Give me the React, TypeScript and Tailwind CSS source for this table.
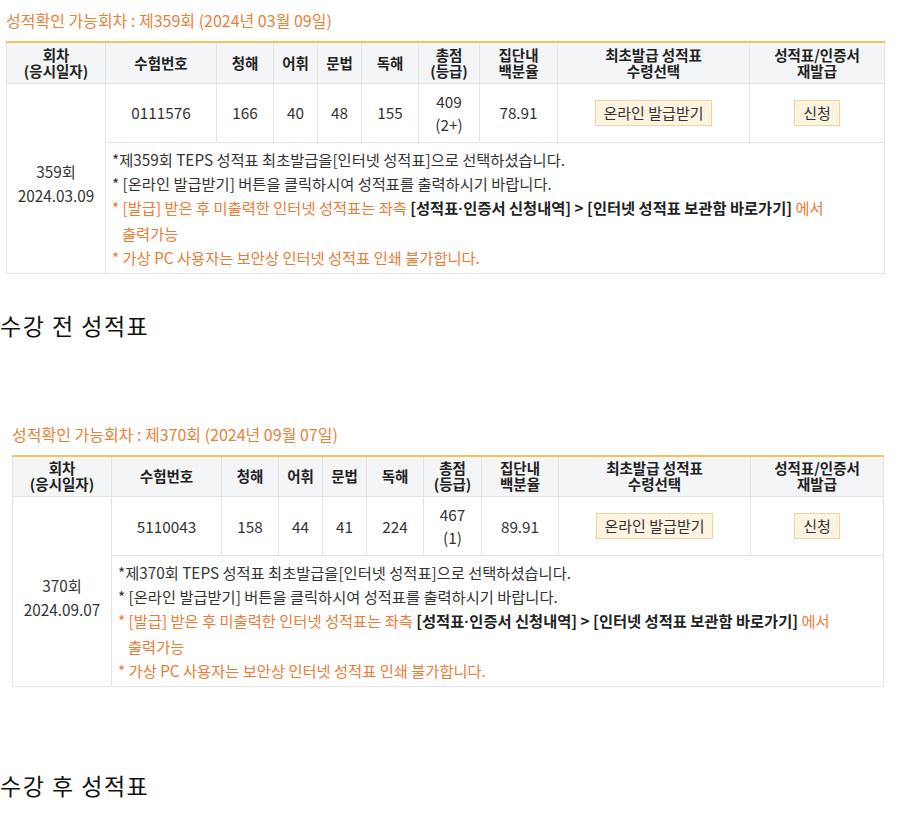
import React from 'react';

type Exam = {
  round: string;
  date: string;
  titleDate: string;
  examNo: string;
  listening: string;
  vocab: string;
  grammar: string;
  reading: string;
  total: string;
  grade: string;
  percentile: string;
  cols: number[];
};

const font = { fontFamily: '"Noto Sans CJK KR", "Noto Sans", sans-serif' };

function ScoreTable({ exam }: { exam: Exam }) {
  const th = 'border-l border-[#e3e3e3] first:border-l-0 font-bold text-[#222] text-[14.5px] leading-[16px] align-middle text-center';
  const td = 'border-l border-[#e3e3e3] text-center align-middle text-[#333]';
  const total = exam.cols.reduce((a, b) => a + b, 0);
  return (
    <div>
      <p className="text-[16px] text-[#e8823a] leading-[20px] mb-[11px]">
        성적확인 가능회차 : 제{exam.round}회 ({exam.titleDate})
      </p>
      <table
        className="table-fixed border-collapse border-t-2 border-t-[#f0c25a] border-x border-b border-[#e3e3e3] text-[15.3px]"
        style={{ width: total }}
      >
        <colgroup>
          {exam.cols.map((w, i) => (
            <col key={i} style={{ width: w }} />
          ))}
        </colgroup>
        <thead>
          <tr className="h-[41px] bg-[#f4f5f7] border-b border-[#e3e3e3]">
            <th className={th}>
              회차
              <br />
              (응시일자)
            </th>
            <th className={th}>수험번호</th>
            <th className={th}>청해</th>
            <th className={th}>어휘</th>
            <th className={th}>문법</th>
            <th className={th}>독해</th>
            <th className={th}>
              총점
              <br />
              (등급)
            </th>
            <th className={th}>
              집단내
              <br />
              백분율
            </th>
            <th className={th}>
              최초발급 성적표
              <br />
              수령선택
            </th>
            <th className={th}>
              성적표/인증서
              <br />
              재발급
            </th>
          </tr>
        </thead>
        <tbody>
          <tr className="h-[59px] border-b border-[#e3e3e3]">
            <td rowSpan={2} className="text-center align-middle text-[#333] leading-[24px] pt-[10px]">
              {exam.round}회
              <br />
              {exam.date}
            </td>
            <td className={td}>{exam.examNo}</td>
            <td className={td}>{exam.listening}</td>
            <td className={td}>{exam.vocab}</td>
            <td className={td}>{exam.grammar}</td>
            <td className={td}>{exam.reading}</td>
            <td className={`${td} leading-[23px]`}>
              {exam.total}
              <br />
              {exam.grade}
            </td>
            <td className={td}>{exam.percentile}</td>
            <td className={td}>
              <button className="h-[26px] px-[8px] bg-[#fdf3e1] border border-[#f1d49a] text-[#333] text-[15px] leading-[24px]">
                온라인 발급받기
              </button>
            </td>
            <td className={td}>
              <button className="h-[26px] px-[8px] bg-[#fdf3e1] border border-[#f1d49a] text-[#333] text-[15px] leading-[24px]">
                신청
              </button>
            </td>
          </tr>
          <tr>
            <td colSpan={9} className="border-l border-[#e3e3e3] pl-[6px] pt-[4px] pb-[4px] leading-[24px] text-[#333] whitespace-nowrap">
              <p>*제{exam.round}회 TEPS 성적표 최초발급을[인터넷 성적표]으로 선택하셨습니다.</p>
              <p>* [온라인 발급받기] 버튼을 클릭하시여 성적표를 출력하시기 바랍니다.</p>
              <p className="text-[#ec7b35]">
                * [발급] 받은 후 미출력한 인터넷 성적표는 좌측{' '}
                <b className="text-[#222]">
                  [성적표<span style={{ fontFamily: '"Liberation Sans", sans-serif' }}>·</span>인증서 신청내역] &gt; [인터넷 성적표 보관함 바로가기]
                </b>{' '}
                에서
                <br />
                <span className="pl-[10px]">출력가능</span>
              </p>
              <p className="text-[#ec7b35]">* 가상 PC 사용자는 보안상 인터넷 성적표 인쇄 불가합니다.</p>
            </td>
          </tr>
        </tbody>
      </table>
    </div>
  );
}

const exams: Exam[] = [
  {
    round: '359',
    date: '2024.03.09',
    titleDate: '2024년 03월 09일',
    examNo: '0111576',
    listening: '166',
    vocab: '40',
    grammar: '48',
    reading: '155',
    total: '409',
    grade: '(2+)',
    percentile: '78.91',
    cols: [99, 111, 57, 44, 44, 57, 61, 78, 192, 135],
  },
  {
    round: '370',
    date: '2024.09.07',
    titleDate: '2024년 09월 07일',
    examNo: '5110043',
    listening: '158',
    vocab: '44',
    grammar: '41',
    reading: '224',
    total: '467',
    grade: '(1)',
    percentile: '89.91',
    cols: [99, 110, 57, 44, 44, 57, 58, 77, 192, 133],
  },
];

export default function App() {
  return (
    <div className="w-[898px] h-[817px] bg-white overflow-hidden" style={font}>
      <div className="pl-[6px] pt-[10px]">
        <ScoreTable exam={exams[0]} />
      </div>
      <p className="mt-[37px] text-[23px] leading-[28px] text-[#111] tracking-[1.5px]">수강 전 성적표</p>
      <div className="pl-[12px] mt-[85px]">
        <ScoreTable exam={exams[1]} />
      </div>
      <p className="mt-[84px] text-[23px] leading-[28px] text-[#111] tracking-[1.5px]">수강 후 성적표</p>
    </div>
  );
}
